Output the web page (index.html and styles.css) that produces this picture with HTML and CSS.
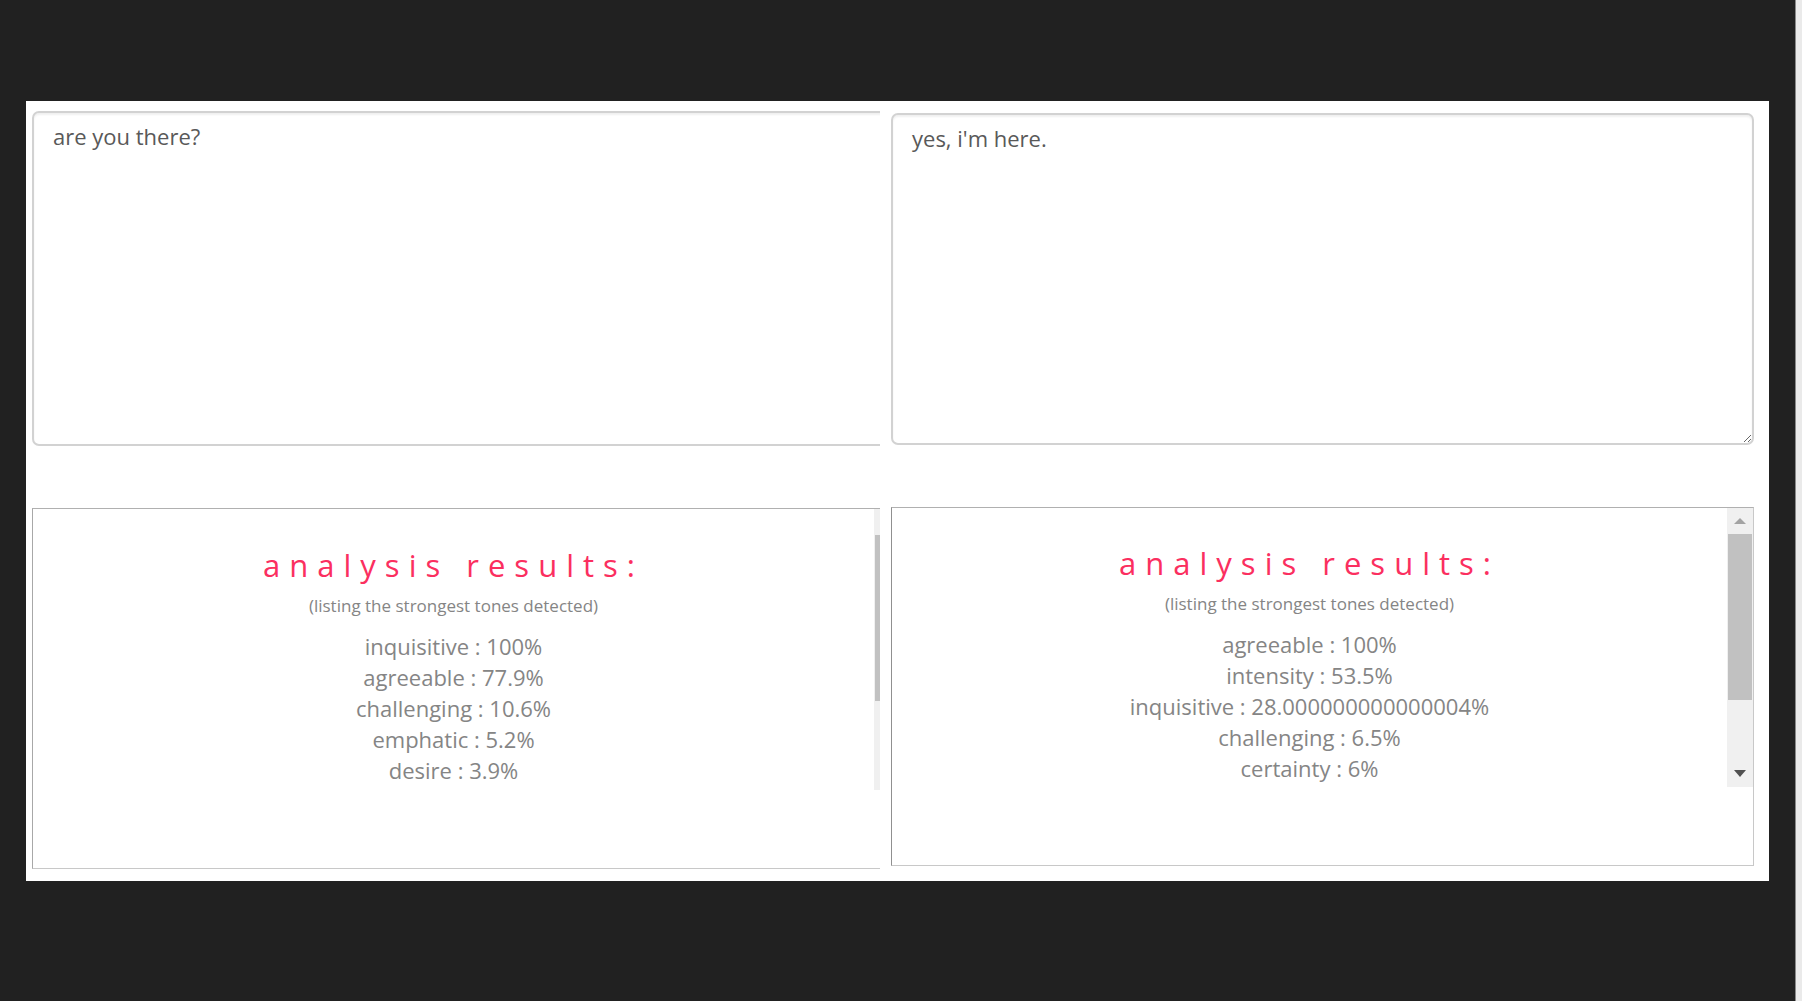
FILE: index.html
```html
<!DOCTYPE html>
<html lang="en">
<head>
<meta charset="utf-8">
<title>Tone analysis</title>
<link rel="stylesheet" href="styles.css">
</head>
<body>
<main class="stage">
  <div class="panel">
    <section class="column column-left">
      <textarea class="message" aria-label="First message">are you there?</textarea>
      <div class="results">
        <div class="viewport">
          <div class="tones">
            <h2 class="title">analysis results:</h2>
            <p class="note">(listing the strongest tones detected)</p>
            <ul class="list">
              <li>inquisitive : 100%</li>
              <li>agreeable : 77.9%</li>
              <li>challenging : 10.6%</li>
              <li>emphatic : 5.2%</li>
              <li>desire : 3.9%</li>
            </ul>
          </div>
          <div class="scrollbar" aria-hidden="true"><span class="arrow arrow-up"></span><span class="thumb"></span><span class="arrow arrow-down"></span></div>
        </div>
      </div>
    </section>
    <section class="column column-right">
      <textarea class="message" aria-label="Second message">yes, i'm here.</textarea>
      <div class="results">
        <div class="viewport">
          <div class="tones">
            <h2 class="title">analysis results:</h2>
            <p class="note">(listing the strongest tones detected)</p>
            <ul class="list">
              <li>agreeable : 100%</li>
              <li>intensity : 53.5%</li>
              <li>inquisitive : 28.000000000000004%</li>
              <li>challenging : 6.5%</li>
              <li>certainty : 6%</li>
            </ul>
          </div>
          <div class="scrollbar" aria-hidden="true"><span class="arrow arrow-up"></span><span class="thumb"></span><span class="arrow arrow-down"></span></div>
        </div>
      </div>
    </section>
  </div>
</main>
</body>
</html>
```

FILE: styles.css
```css
* {
  box-sizing: border-box;
}

body {
  margin: 0;
  background: #eaeaea;
  font-family: "Open Sans", sans-serif;
  color: #858585;
}

.stage {
  min-height: 100vh;
  margin-right: 6px;
  padding: 101px 26px;
  border-right: 1px solid #8a8a8a;
  background: #212121;
}

.panel {
  display: grid;
  grid-template-columns: 854fr 889fr;
  background: #fff;
}

.column {
  display: flex;
  flex-direction: column;
  gap: 62px;
  min-width: 0;
}

.column-left {
  padding: 10px 0 12px 6px;
  overflow: hidden;
}

.column-right {
  padding: 12px 15px 15px 11px;
}

/* The left column runs on under the right one. */
.column-left .message,
.column-left .results {
  width: calc(100% + 21px);
}

.message {
  display: block;
  width: 100%;
  height: 335px;
  margin: 0;
  padding: 7px 19px;
  border: 2px solid #d2d2d2;
  border-radius: 7px;
  background: #fff;
  box-shadow: inset 0 2px 2px #f0f0f0;
  color: #595959;
  font: 22px/32px "Open Sans", sans-serif;
  resize: none;
}

.column-right .message {
  height: 332px;
  resize: vertical;
}

.results {
  height: 361px;
  border: 1px solid #c8c8c8;
  border-top-color: #b0b0b0;
  border-left-color: #a8a8a8;
}

.column-right .results {
  height: 359px;
  border-left-color: #909090;
}

.viewport {
  display: flex;
  height: 281px;
}

.column-right .viewport {
  height: 279px;
}

.tones {
  flex: 1;
  min-width: 0;
  padding-top: 35px;
  text-align: center;
}

.column-right .tones {
  padding-top: 34px;
}

.title {
  margin: 0;
  color: #fb2f5f;
  font-size: 31px;
  font-weight: 400;
  line-height: 42px;
  letter-spacing: 9px;
}

.note {
  margin: 7px 0 12px;
  font-size: 17px;
  line-height: 26px;
}

.list {
  margin: 0;
  padding: 0;
  font-size: 22px;
  line-height: 31px;
  list-style: none;
}

.scrollbar {
  display: flex;
  flex-direction: column;
  align-items: center;
  width: 26px;
  background: #f0f0f0;
}

.thumb {
  width: 24px;
  height: 166px;
  margin-top: 10px;
  background: #c1c1c1;
}

.arrow {
  border: 6px solid transparent;
  border-width: 0 6px;
}

.arrow-up {
  margin-top: 10px;
  border-bottom: 6px solid #a3a3a3;
}

.arrow-down {
  margin-top: auto;
  margin-bottom: 10px;
  border-top: 7px solid #505050;
}
```
